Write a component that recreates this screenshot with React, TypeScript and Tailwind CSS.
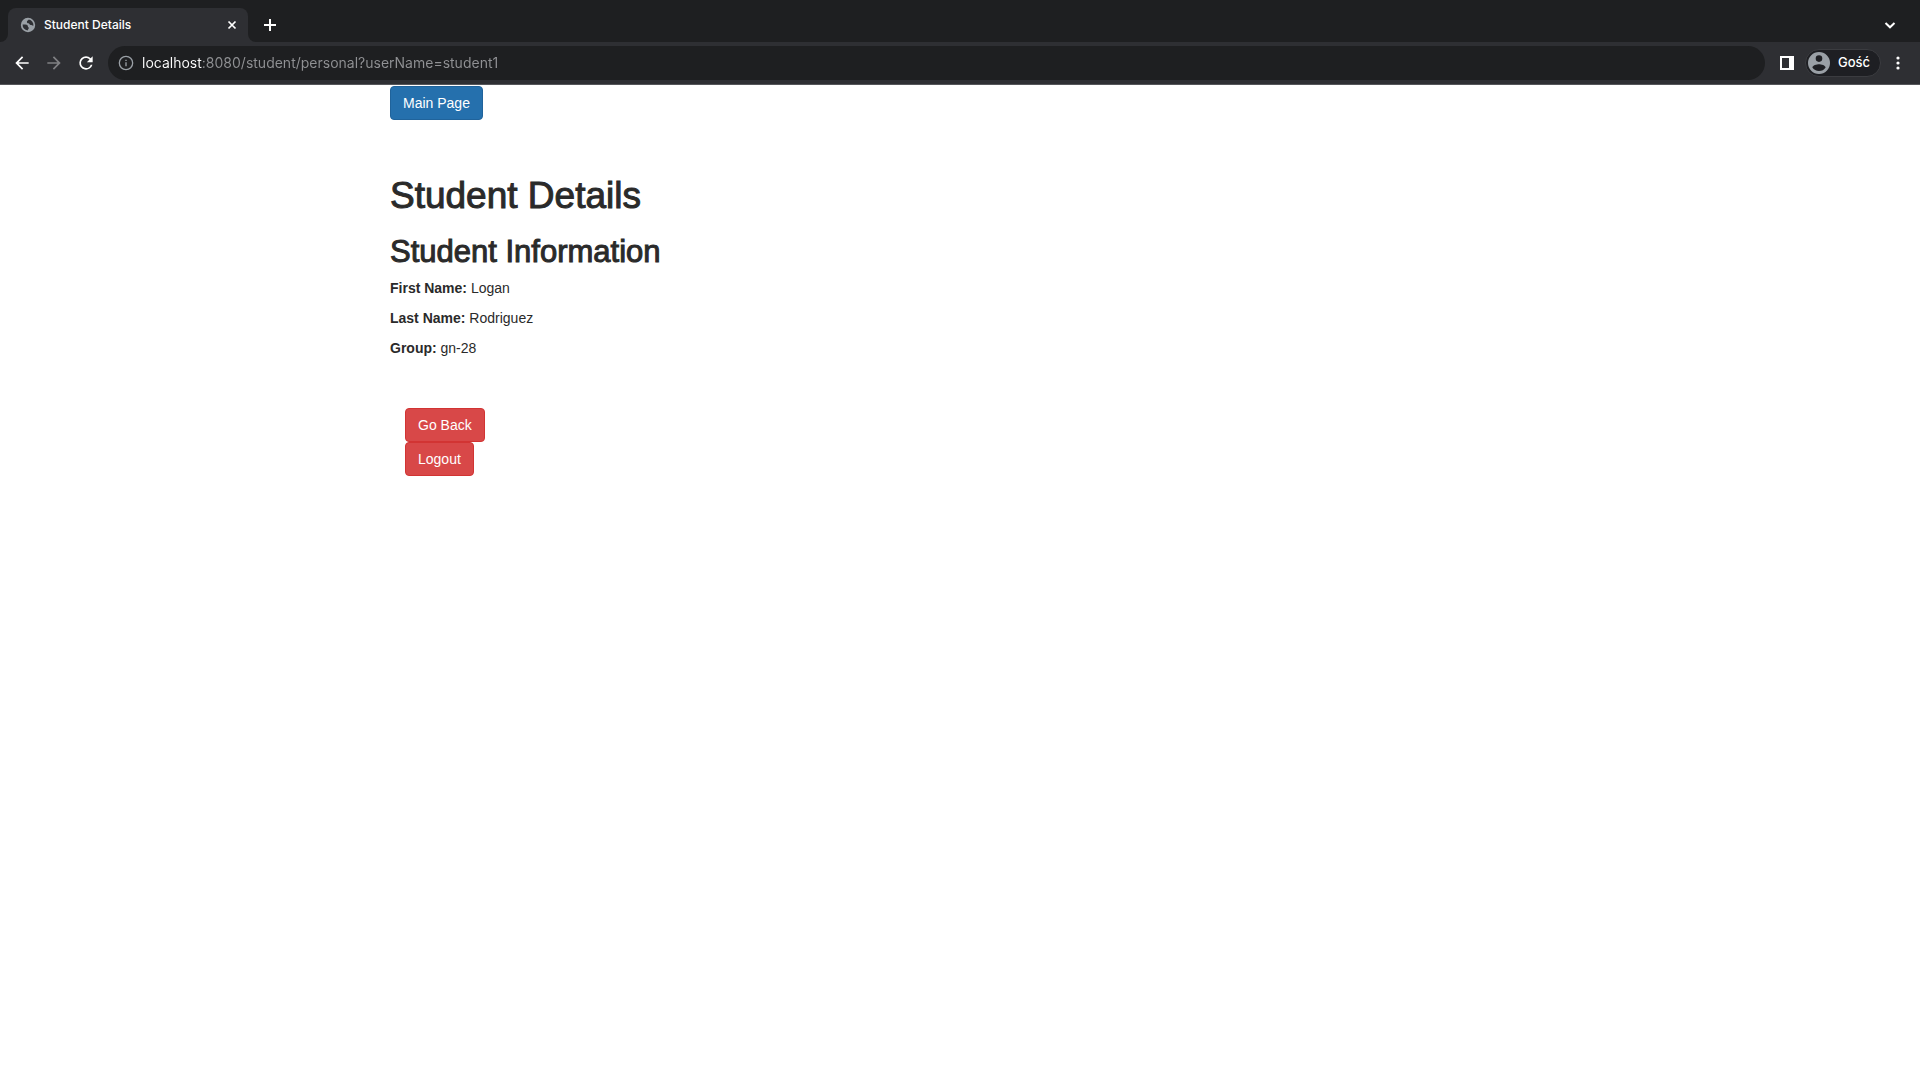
import React from "react";

const iconButton = "flex size-8 items-center justify-center";

function Glyph({ d, className = "" }: { d: string; className?: string }) {
  return (
    <svg viewBox="0 0 24 24" fill="currentColor" className={className} aria-hidden="true">
      <path d={d} />
    </svg>
  );
}

function TabStrip() {
  return (
    <div className="flex h-[42px] items-end bg-[#1e1f21]">
      <div className="flex w-2 items-end bg-[#2e2f33]">
        <span className="h-[34px] w-full rounded-br-lg bg-[#1e1f21]" />
      </div>
      <div className="flex h-[34px] w-60 items-center rounded-t-lg bg-[#2e2f33] pr-[10px] pl-3">
        <svg viewBox="0 0 16 16" className="size-4 text-[#9aa0a6]" aria-hidden="true">
          <circle cx="8" cy="8" r="7.200" fill="currentColor" />
          <path
            d="M2.600 7.600h2.900c1.500 0 2.400.7 2.400 2 0 .6.300.9.900 1 .3.900-.6 1.500-1.200 2.800A5.500 5.500 0 0 1 2.600 7.600ZM8.800 2.600c-.3 1-1.900 1-1.900 2.200 0 1 .6 1.500 1.600 1.500.8 0 .9 1.700 2.300 1.700 1 0 1.500.9 2.600.7A5.500 5.500 0 0 0 8.800 2.600Z"
            fill="#2e2f33"
          />
        </svg>
        <span className="ml-2 flex-1 font-['Inter'] text-xs font-medium text-white">
          Student Details
        </span>
        <button type="button" aria-label="Close tab" className="flex size-3 items-center justify-center text-white">
          <svg viewBox="0 0 12 12" className="size-3" stroke="currentColor" strokeWidth="1.700" aria-hidden="true">
            <path d="M2.500 2.500l7 7M9.500 2.500l-7 7" />
          </svg>
        </button>
      </div>
      <div className="flex w-2 items-end bg-[#2e2f33]">
        <span className="h-[34px] w-full rounded-bl-lg bg-[#1e1f21]" />
      </div>
      <button type="button" aria-label="New tab" className="flex h-[34px] w-7 items-center justify-center text-white">
        <svg viewBox="0 0 12 12" className="size-3" stroke="currentColor" strokeWidth="2" aria-hidden="true">
          <path d="M6 0v12M0 6h12" />
        </svg>
      </button>
      <button type="button" aria-label="Search tabs" className="mr-[14px] ml-auto flex h-[34px] w-8 items-center justify-center text-white">
        <svg viewBox="0 0 12 12" className="size-3" fill="none" stroke="currentColor" strokeWidth="2" aria-hidden="true">
          <path d="M1.500 4L6 8.300 10.500 4" />
        </svg>
      </button>
    </div>
  );
}

function Toolbar() {
  return (
    <div className="flex h-[43px] items-center border-b border-[#55565a] bg-[#2e2f33] px-[6px]">
      <button type="button" aria-label="Back" className={`${iconButton} text-white`}>
        <Glyph className="size-[20px]" d="M20 11H7.830l5.590-5.590L12 4l-8 8 8 8 1.410-1.410L7.830 13H20v-2z" />
      </button>
      <button type="button" aria-label="Forward" className={`${iconButton} text-[#808184]`}>
        <Glyph className="size-[20px]" d="M12 4l-1.410 1.410L16.170 11H4v2h12.170l-5.580 5.590L12 20l8-8z" />
      </button>
      <button type="button" aria-label="Reload" className={`${iconButton} text-white`}>
        <Glyph
          className="size-[20px]"
          d="M17.650 6.350A7.958 7.958 0 0 0 12 4a8 8 0 1 0 7.730 10h-2.080A5.990 5.990 0 0 1 12 18a6 6 0 1 1 0-12c1.660 0 3.140.69 4.220 1.780L13 11h7V4l-2.350 2.350z"
        />
      </button>
      <form className="ml-[6px] flex h-[34px] flex-1 items-center rounded-full bg-[#1e1f21] pr-4 pl-[10px]">
        <Glyph
          className="size-4 text-[#9aa0a6]"
          d="M11 17h2v-6h-2v6zm1-16a11 11 0 1 0 0 22 11 11 0 0 0 0-22zm0 20a9 9 0 1 1 0-18 9 9 0 0 1 0 18zM11 9h2V7h-2v2z"
        />
        <input
          type="text"
          aria-label="Address"
          defaultValue="localhost:8080/student/personal?userName=student1"
          className="ml-2 h-5 min-w-0 flex-1 bg-[linear-gradient(90deg,#ffffff_60px,#909194_60px)] bg-clip-text font-['Inter'] text-sm text-transparent caret-white outline-none"
        />
      </form>
      <button type="button" aria-label="Side panel" className="ml-[6px] flex size-8 items-center justify-center text-white">
        <svg viewBox="0 0 14 14" className="size-[14px]" fill="currentColor" aria-hidden="true">
          <path fillRule="evenodd" d="M0 0h14v14H0zM2 2v10h7V2z" />
        </svg>
      </button>
      <button
        type="button"
        className="ml-[2px] flex h-7 items-center rounded-full border border-[#3b3c40] bg-[#1e1f23] pr-[10px] pl-[2px] font-['Inter'] text-[13px] font-medium text-white"
      >
        <Glyph
          className="mr-2 size-[22px] text-[#9aa0a6]"
          d="M12 0a12 12 0 1 0 0 24 12 12 0 0 0 0-24zm0 3.600a3.600 3.600 0 1 1 0 7.200 3.600 3.600 0 0 1 0-7.200zm0 17.200c-3 0-5.650-1.500-7.200-3.850C4.840 14.550 9.600 13.250 12 13.250s7.160 1.300 7.200 3.700A8.640 8.640 0 0 1 12 20.800z"
        />
        Gość
      </button>
      <button type="button" aria-label="Menu" className="ml-px flex size-8 items-center justify-center text-white">
        <svg viewBox="0 0 4 14" className="h-[14px] w-1" fill="currentColor" aria-hidden="true">
          <circle cx="2" cy="2" r="1.600" />
          <circle cx="2" cy="7" r="1.600" />
          <circle cx="2" cy="12" r="1.600" />
        </svg>
      </button>
    </div>
  );
}

const details = [
  { label: "First Name:", value: "Logan" },
  { label: "Last Name:", value: "Rodriguez" },
  { label: "Group:", value: "gn-28" },
];

const buttonBase = "h-[34px] rounded-sm border px-3 text-white";

export default function App() {
  return (
    <div className="min-h-screen bg-white">
      <header>
        <TabStrip />
        <Toolbar />
      </header>
      <main className="mx-auto max-w-[1170px] px-[15px] pt-px font-['Liberation_Sans',sans-serif] text-sm leading-5 text-[#2a2a2a]">
        <button type="button" className={`${buttonBase} border-[#20639b] bg-[#2570ad]`}>
          Main Page
        </button>
        <h1 className="mt-14 text-[37px] leading-10 [-webkit-text-stroke:1px]">Student Details</h1>
        <h2 className="mt-5 mb-[10px] text-[31px] leading-8 [-webkit-text-stroke:1px]">
          Student Information
        </h2>
        {details.map((item) => (
          <p key={item.label} className="mb-[10px]">
            <strong className="font-bold">{item.label}</strong> {item.value}
          </p>
        ))}
        <div className="mt-[50px] flex flex-col items-start pl-[15px]">
          <button type="button" className={`${buttonBase} border-[#d23433] bg-[#d84848]`}>
            Go Back
          </button>
          <button type="button" className={`${buttonBase} border-[#d23433] bg-[#d84848]`}>
            Logout
          </button>
        </div>
      </main>
    </div>
  );
}
